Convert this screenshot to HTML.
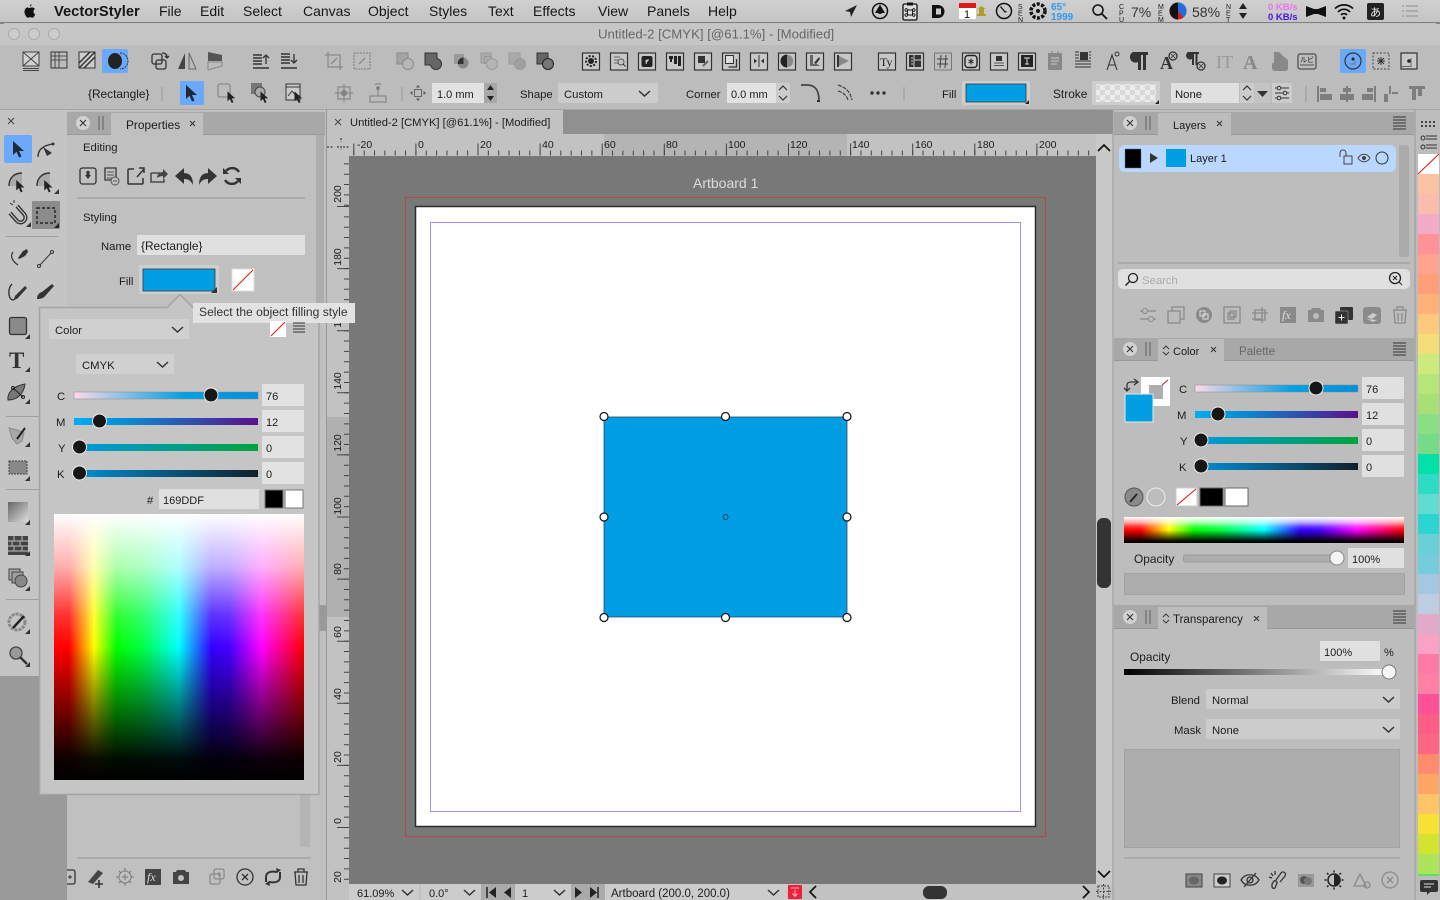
<!DOCTYPE html>
<html lang="en"><head><meta charset="utf-8"><title>VectorStyler</title>
<style>
html,body{margin:0;padding:0;width:1440px;height:900px;overflow:hidden;background:#c2c2c2}
svg{display:block;position:absolute;left:0;top:0}
text{font-family:"Liberation Sans","Noto Sans CJK JP",sans-serif;font-size:11.300px;fill:#1c1c1c}
.m{font-size:14px;fill:#161616}
.n{font-size:11px}
.w{font-size:11.900px}
.s{fill:none;stroke:#333;stroke-width:1.300}
.d{fill:none;stroke:#8a8a8a;stroke-width:1.300}
</style></head><body>
<svg width="1440" height="900" viewBox="0 0 1440 900" xmlns="http://www.w3.org/2000/svg">
<defs>
<linearGradient id="ms" x1="0" y1="0" x2="0" y2="1"><stop offset="0" stop-color="#d0d0d0"/><stop offset="1" stop-color="#c4c4c4"/></linearGradient>
<linearGradient id="hue"><stop offset="0" stop-color="#f00"/><stop offset=".06" stop-color="#f00"/><stop offset=".16" stop-color="#ff0"/><stop offset=".25" stop-color="#0f0"/><stop offset=".35" stop-color="#0f4"/><stop offset=".5" stop-color="#0ff"/><stop offset=".63" stop-color="#30f"/><stop offset=".7" stop-color="#40f"/><stop offset=".83" stop-color="#f0f"/><stop offset="1" stop-color="#f00"/></linearGradient>
<linearGradient id="wh" x1="0" y1="0" x2="0" y2="1"><stop offset="0" stop-color="#fff"/><stop offset=".2" stop-color="#fff" stop-opacity=".68"/><stop offset=".38" stop-color="#fff" stop-opacity=".2"/><stop offset=".5" stop-color="#fff" stop-opacity="0"/></linearGradient>
<linearGradient id="bk" x1="0" y1="0" x2="0" y2="1"><stop offset=".5" stop-color="#000" stop-opacity="0"/><stop offset=".92" stop-color="#000" stop-opacity=".95"/><stop offset="1" stop-color="#000"/></linearGradient>
<linearGradient id="gc"><stop offset="0" stop-color="#fdd9e8"/><stop offset=".6" stop-color="#00a0e3"/><stop offset="1" stop-color="#0090dc"/></linearGradient>
<linearGradient id="gm"><stop offset="0" stop-color="#00adf2"/><stop offset=".3" stop-color="#0a8ad0"/><stop offset="1" stop-color="#5b0f8c"/></linearGradient>
<linearGradient id="gy"><stop offset="0" stop-color="#0098e0"/><stop offset="1" stop-color="#00a33f"/></linearGradient>
<linearGradient id="gk"><stop offset="0" stop-color="#0090d8"/><stop offset="1" stop-color="#10202c"/></linearGradient>
<linearGradient id="gt"><stop offset="0" stop-color="#000"/><stop offset="1" stop-color="#fff"/></linearGradient>
<linearGradient id="gl" x1="0" y1="0" x2="1" y2="1"><stop offset="0" stop-color="#666"/><stop offset="1" stop-color="#ddd"/></linearGradient>
<pattern id="ck" width="10" height="10" patternUnits="userSpaceOnUse"><rect width="10" height="10" fill="#ececec"/><rect width="5" height="5" fill="#d8d8d8"/><rect x="5" y="5" width="5" height="5" fill="#d8d8d8"/></pattern>
<path id="chev" d="M0 0l5.500 5 5.500-5" fill="none" stroke="#333" stroke-width="1.500"/>
<path id="arrow" d="M-5-8L-5 6l3.500-3.200L1 8.500l2.500-1L1 2l5 0z"/>
<g id="closeb"><circle r="7" fill="#d2d2d2"/><path d="M-3-3l6 6M3-3l-6 6" stroke="#333" stroke-width="1.100"/></g>
<g id="menu"><path d="M-6-6h13M-6-3h13M-6 0h13M-6 3h13M-6 6h13" stroke="#333" stroke-width="1"/></g>
<g id="grip"><path d="M-2-7v14M2-7v14" stroke="#777" stroke-width="1.500"/></g>
<g id="pic"><rect x="-8.500" y="-8" width="17" height="17" fill="#c8c8c8" stroke="#333" stroke-width="1.200"/></g>
<path id="pil" d="M-7 4h14v-1l-3 0v-2h-1"/>
</defs>

<!-- menu bar -->
<rect width="1440" height="23" fill="url(#ms)"/>
<path d="M0 23h1440" stroke="#3a3a3a"/>
<path d="M31.500 4.200c-.9.200-1.700 1.100-1.600 2.300 1-.1 1.800-1.100 1.600-2.300zM28 7.400c-2.700 0-4.500 3.500-3 7 1 2.300 2 3.300 3 3.300.9 0 1.200-.6 2.200-.6s1.200.6 2.200.6c1.100 0 2.200-1.800 2.800-3.300-2.200-1.100-2.300-4.300-.2-5.400-.8-1.200-2-1.600-3-1.600s-1.600.6-2.500.6-1.500-.6-2.500-.6z" fill="#111"/>
<text class="m" x="54" y="16" style="font-weight:bold;font-size:14.700px">VectorStyler</text>
<text class="m" x="159" y="16">File</text><text class="m" x="200" y="16">Edit</text><text class="m" x="243" y="16">Select</text><text class="m" x="303" y="16">Canvas</text><text class="m" x="368" y="16">Object</text><text class="m" x="429" y="16">Styles</text><text class="m" x="488" y="16">Text</text><text class="m" x="533" y="16">Effects</text><text class="m" x="598" y="16">View</text><text class="m" x="647" y="16">Panels</text><text class="m" x="708" y="16">Help</text>
<path d="M857 5l-12 6 5 1 1 5z" fill="#222"/>
<circle cx="880" cy="11" r="7.500" fill="none" stroke="#111" stroke-width="1.500"/><path d="M880 4.500l5 8.500h-10z" fill="#111"/><circle cx="880" cy="11" r="3" fill="#111"/>
<rect x="903" y="4" width="14" height="16" rx="1.500" fill="#ddd" stroke="#111" stroke-width="1.300"/><rect x="907" y="2.500" width="6" height="3" fill="#111"/><path d="M907.500 10h5v5h-5zM907.500 10a1.300 1.300 0 1 1 0-.1zM912.500 10a1.300 1.300 0 1 0 0-.1zM907.500 15a1.300 1.300 0 1 0 0 .1zM912.500 15a1.300 1.300 0 1 1 0 .1z" fill="none" stroke="#111" stroke-width=".9"/>
<path d="M932 5h6a6.500 6.500 0 0 1 0 13h-6z" fill="#111"/><rect x="936" y="8.500" width="5" height="6" fill="#ccc"/>
<rect x="959" y="3" width="17" height="16" fill="#fff"/><rect x="959" y="3" width="17" height="5" fill="#e01818"/><text x="964" y="18" style="font-size:11px;fill:#111">1</text>
<path d="M977 14h9v2h-9zM979 9h5v5h-5zM981.500 6l4 3h-8z" fill="#b0a020"/>
<circle cx="1004" cy="11" r="7.500" fill="none" stroke="#111" stroke-width="1.500"/><path d="M1000.500 6.500L1005 12l1.500-.5" fill="none" stroke="#111" stroke-width="1.300"/>
<text x="1018" y="9" style="font-size:7px">S</text><text x="1018" y="15.500" style="font-size:7px">E</text><text x="1018" y="22" style="font-size:7px">N</text>
<text x="1119" y="9" style="font-size:7px">C</text><text x="1119" y="15.500" style="font-size:7px">P</text><text x="1119" y="22" style="font-size:7px">U</text>
<text x="1158" y="9" style="font-size:7px">M</text><text x="1158" y="15.500" style="font-size:7px">E</text><text x="1158" y="22" style="font-size:7px">M</text>
<text x="1226" y="9" style="font-size:7px">N</text><text x="1226" y="15.500" style="font-size:7px">E</text><text x="1226" y="22" style="font-size:7px">T</text>
<circle cx="1038" cy="11" r="7" fill="none" stroke="#111" stroke-width="3.500" stroke-dasharray="3 1.500"/><circle cx="1038" cy="11" r="2" fill="#111"/>
<text x="1051" y="10" style="font-size:10px;fill:#2f9bf0;font-weight:bold">65°</text><text x="1051" y="20" style="font-size:10px;fill:#2f9bf0;font-weight:bold">1999</text>
<circle cx="1098" cy="10" r="5" fill="none" stroke="#111" stroke-width="1.500"/><path d="M1102 14l5 5" stroke="#111" stroke-width="1.800"/>
<text x="1131" y="17" style="font-size:14px;fill:#333">7%</text>
<circle cx="1178" cy="11" r="8.500" fill="#e01818"/><path d="M1178 11V2.500a8.500 8.500 0 0 1 8.500 8z" fill="#1f6fe0"/><path d="M1178 11l8.500-.5a8.500 8.500 0 0 1-3 7z" fill="#1f6fe0"/><path d="M1178 19.500a8.500 8.500 0 0 1 0-17z" fill="#111"/>
<text x="1192" y="17" style="font-size:14px;fill:#333">58%</text>
<path d="M1243 3l4 6h-8zM1243 19l4-6h-8z" fill="#222"/>
<text x="1268" y="10" style="font-size:9.500px;fill:#f070f0;font-weight:bold">0 KB/s</text><text x="1268" y="20" style="font-size:9.500px;fill:#4a16e8;font-weight:bold">0 KB/s</text>
<path d="M1306 6l8 3h4l8-3v11l-8-3h-4l-8 3z" fill="#111"/>
<path d="M1335 8.500a13 13 0 0 1 18 0M1338 12a8 8 0 0 1 12 0M1341 15a4 4 0 0 1 6 0" fill="none" stroke="#111" stroke-width="1.700"/><circle cx="1344" cy="18" r="1.500" fill="#111"/>
<rect x="1367" y="3" width="17" height="17" rx="2" fill="#222"/><text x="1370" y="16" style="font-size:11px;fill:#eee">あ</text>
<path d="M1402 6h2M1402 11h2M1402 16h2M1406 6h12M1406 11h12M1406 16h12" stroke="#999" stroke-width="1.300"/>

<!-- window chrome -->
<path d="M0 28a5 5 0 0 1 5-5h1430a5 5 0 0 1 5 5v82H0z" fill="#c2c2c2"/>
<rect x="0" y="24" width="1440" height="21" fill="#c6c6c6"/>
<circle cx="14" cy="34" r="5.500" fill="#cdcdcd" stroke="#aaa"/><circle cx="34" cy="34" r="5.500" fill="#cdcdcd" stroke="#aaa"/><circle cx="54" cy="34" r="5.500" fill="#cdcdcd" stroke="#aaa"/>
<text x="598" y="38.500" style="font-size:13.200px;fill:#666">Untitled-2 [CMYK] [@61.1%] - [Modified]</text>
<rect x="0" y="45" width="1440" height="65" fill="#bcbcbc"/>
<path d="M0 109.500h1440" stroke="#a6a6a6"/>

<!-- toolbar row 1 -->
<rect x="102" y="49" width="26" height="24" rx="2" fill="#6aa9fb"/>
<g transform="translate(31,60)"><rect x="-8" y="-8" width="16" height="14" fill="#d0d0d0" stroke="#444"/><path d="M-8-8l16 14M8-8l-16 14M-8 8.500h16M-8 10.500h16" stroke="#444" fill="none"/></g>
<g transform="translate(59,60)"><rect x="-8" y="-8" width="16" height="16" fill="#bbb" stroke="#333"/><path d="M-8-4h16M-8 0h16M-4-8v16M0-8v16" stroke="#333" stroke-width=".8"/></g>
<g transform="translate(87,60)"><rect x="-8" y="-8" width="16" height="16" fill="#ccc" stroke="#333"/><path d="M-8 3L3-8M-8 8L8-8M-3 8L8-3" stroke="#333" stroke-width="1.500"/></g>
<g transform="translate(115,61)"><ellipse rx="7" ry="8" fill="#222"/><path d="M5-8a8 8 0 0 1 0 16" fill="none" stroke="#333" stroke-dasharray="2 1"/></g>
<g transform="translate(159,61)"><rect x="-7" y="-7" width="10" height="10" rx="2" class="s"/><rect x="-3" y="-1" width="10" height="9" rx="2" class="s"/><path d="M3-8c3 0 5 1 5 4M6-5l2 2 2-2" class="s"/></g>
<g transform="translate(187,61)"><path d="M-2-8v16h-7z" fill="#444"/><path d="M2-8v16h7z" fill="#bbb" stroke="#666"/></g>
<g transform="translate(215,61)"><path d="M-7-9l14 3v6h-14z" fill="#555"/><path d="M-7 1h14v4l-14 4z" fill="#bbb" stroke="#888"/></g>
<g transform="translate(261,61)"><path d="M-8-6h9M-8-3h9M-8 0h9M-8 3h9M-8 7h16" stroke="#333" stroke-width="1.500"/><path d="M5 3v-9M2-3l3-3 3 3" class="s"/></g>
<g transform="translate(289,61)"><path d="M-8-7h9M-8-4h9M-8-1h9M-8 2h9M-8 7h16" stroke="#333" stroke-width="1.500"/><path d="M5-7v9M2-1l3 3 3-3" class="s"/></g>
<g transform="translate(334,61)"><rect x="-6" y="-6" width="12" height="12" class="d"/><path d="M-3 3l6-6M-9-6h3M6 6h3M-6-9v3M6 6v3" class="d"/></g>
<g transform="translate(362,61)"><rect x="-8" y="-8" width="16" height="16" class="d" stroke-dasharray="2 1"/><path d="M-3 3l6-6" class="d"/></g>
<g transform="translate(405,61)"><rect x="-8" y="-8" width="11" height="11" fill="#a4a4a4" stroke="#8a8a8a"/><circle cx="3" cy="3" r="5.500" fill="#b8b8b8" stroke="#8a8a8a"/></g>
<g transform="translate(433,61)"><rect x="-8" y="-8" width="12" height="12" fill="#666" stroke="#333"/><circle cx="3" cy="3" r="5.500" fill="#666" stroke="#333"/><rect x="-7.500" y="-7.500" width="11" height="11" fill="#666"/></g>
<g transform="translate(461,61)"><rect x="-7" y="-7" width="10" height="10" fill="#999"/><circle cx="2" cy="2" r="5.500" fill="#888"/><path d="M-3 3a5.500 5.500 0 0 1 5.500-6.500V3z" fill="#333"/></g>
<g transform="translate(489,61)"><rect x="-8" y="-8" width="10" height="10" fill="#aaa" stroke="#999"/><rect x="-4.500" y="-4.500" width="7" height="7" fill="none" stroke="#999"/><circle cx="3" cy="3" r="5.500" fill="#b4b4b4" stroke="#999"/></g>
<g transform="translate(517,61)"><rect x="-8" y="-8" width="11" height="11" fill="#aaa" stroke="#999"/><circle cx="3" cy="3" r="5.500" fill="#a0a0a0" stroke="#999"/></g>
<g transform="translate(545,61)"><rect x="-8" y="-8" width="11" height="11" fill="#666" stroke="#333"/><circle cx="3" cy="3" r="5.500" fill="#777" stroke="#222"/></g>
<g transform="translate(591,61)"><use href="#pic"/><circle r="3" fill="#222"/><circle r="5" fill="none" stroke="#222" stroke-dasharray="2 1.500" stroke-width="2"/></g>
<g transform="translate(619,61)"><use href="#pic"/><path d="M-5-4h6M-5-1h4M-5 2h4" stroke="#666"/><circle cx="2" cy="1" r="3" fill="none" stroke="#555"/><path d="M4 3l2.500 2.500" stroke="#333"/></g>
<g transform="translate(647,61)"><use href="#pic"/><rect x="-5.500" y="-5" width="11" height="11" rx="2" fill="#222"/><path d="M-1 3l1-4h2M-2 0h3" stroke="#ddd" fill="none"/></g>
<g transform="translate(675,61)"><use href="#pic"/><path d="M-6-5h4v3h-1v3h-2v-3h-1zM-1-5h3v8h-3zM3-5h3v10h-3z" fill="#222"/></g>
<g transform="translate(703,61)"><use href="#pic"/><rect x="-5" y="-5" width="7" height="7" fill="#333"/><path d="M0 5l5-5" stroke="#666" stroke-width="2"/></g>
<g transform="translate(731,61)"><use href="#pic"/><rect x="-5.500" y="-5.500" width="8" height="8" fill="#ddd" stroke="#333"/><path d="M5.500-2v8h-8" fill="none" stroke="#333" stroke-width="1.300"/></g>
<g transform="translate(759,61)"><use href="#pic"/><path d="M0-6v12" stroke="#333"/><path d="M-2 0l-3-2.500v5zM2 0l3-2.500v5z" fill="#333"/></g>
<g transform="translate(787,61)"><use href="#pic"/><circle r="6.500" fill="#888" stroke-dasharray="1 1" stroke="#c8c8c8"/><path d="M0-6.500a6.500 6.500 0 0 0 0 13z" fill="#222"/></g>
<g transform="translate(815,61)"><use href="#pic"/><path d="M-5 5h10l-3-2h-4V-6h-3z" fill="#666"/><path d="M-1 2l5-6 1 2-4 5z" fill="#333"/></g>
<g transform="translate(843,61)"><use href="#pic"/><path d="M-6-6l12 6-12 6z" fill="#888"/><path d="M-5-6v12" stroke="#333" stroke-width="2"/></g>
<g transform="translate(887,61)"><use href="#pic"/><text x="-7" y="5" style="font-size:12px;font-family:'Liberation Serif',serif;fill:#222">Ty</text></g>
<g transform="translate(915,61)"><use href="#pic"/><rect x="-6" y="-6" width="12" height="12" fill="#333"/><path d="M-1-6v12M-1-1h7" stroke="#ccc"/><path d="M-4-3h2M-4 0h2M-4 3h2" stroke="#ccc"/></g>
<g transform="translate(943,61)"><rect x="-8.500" y="-8" width="17" height="17" fill="none" stroke="#777"/><path d="M-2-6l-1 13M3-6l-1 13M-6-2h11M-6 3h11" stroke="#444"/></g>
<g transform="translate(971,61)"><use href="#pic"/><rect x="-6" y="-5.500" width="12" height="12" rx="3" fill="none" stroke="#222" stroke-width="1.400"/><path d="M0-2.500v6M-2.500-1l5 3M2.500-1l-5 3" stroke="#222"/></g>
<g transform="translate(999,61)"><use href="#pic"/><rect x="-3" y="-5" width="6" height="5" fill="#333"/><path d="M-5 2h10M-5 4.500h10" stroke="#555"/></g>
<g transform="translate(1027,61)"><use href="#pic"/><rect x="-6" y="-6" width="12" height="12" fill="#222"/><path d="M-3-3h6M0-3v6M-2 3h4" stroke="#ddd"/></g>
<g transform="translate(1055,61)"><rect x="-7" y="-8" width="14" height="17" rx="1" fill="#888"/><path d="M-4-3h8M-4 0h8M-4 3h6" stroke="#ccc"/><path d="M-3-10v3M3-10v3" stroke="#888"/></g>
<g transform="translate(1083,61)"><rect x="-3" y="-9" width="8" height="8" fill="#333"/><path d="M-8-9h4M-8-6h4M-8-3h4M6-9h2M6-6h2M6-3h2M-8 0h16M-8 3h16M-8 6h16" stroke="#333"/></g>
<path d="M1107 70l5-15 5 15M1109 65h6" fill="none" stroke="#333" stroke-width="1.100"/><circle cx="1117" cy="54" r="2" fill="none" stroke="#333"/>
<path d="M1133 52h15v3h-2v15h-3V55h-2v15h-3v-8a5.500 5.500 0 0 1-5-10z" fill="#333"/>
<text x="1160" y="69" style="font-size:18px;font-family:'Liberation Serif',serif;fill:#333;font-weight:bold">A</text><circle cx="1173" cy="56" r="4" class="s"/><path d="M1171 54l4 4M1175 54l-4 4" stroke="#333" stroke-width=".8"/>
<path d="M1188 52h11v2h-1.500v11h-2V54h-1.500v11h-2v-6a3.600 3.600 0 0 1-4-7z" fill="#333"/><circle cx="1201" cy="66" r="4" class="s"/><path d="M1199 64l4 4M1203 64l-4 4" stroke="#333" stroke-width=".8"/>
<text x="1216" y="68" style="font-size:18px;font-family:'Liberation Serif',serif;fill:#999">IT</text>
<text x="1243" y="69" style="font-size:20px;font-family:'Liberation Serif',serif;fill:#888;font-weight:bold">A</text>
<path d="M1274 52h5l4 4 4 3c1 1 1 2 1 4v6c-1 2-2 2-4 2h-8c-4 0-4-2-4-4v-3l2-2v-6z" fill="#888"/>
<g transform="translate(1307,61)"><rect x="-9" y="-7" width="18" height="15" rx="2" fill="none" stroke="#333"/><text x="-7" y="1" style="font-size:7px">ルビ</text><path d="M-7 4h14" stroke="#555"/></g>
<rect x="1340" y="49" width="26" height="24" rx="2" fill="#6aa9fb"/>
<circle cx="1353" cy="61" r="8" fill="none" stroke="#333" stroke-width="1.200"/><circle cx="1353" cy="59" r="1.500" fill="#222"/><path d="M1349 64h6v-4" stroke="#777" fill="none"/>
<g transform="translate(1381,61)"><rect x="-8" y="-8" width="16" height="16" fill="none" stroke="#444" stroke-dasharray="2 1.500"/><path d="M0-4v8M-4 0h8M-3-3l6 6M3-3l-6 6" stroke="#333"/></g>
<g transform="translate(1409,61)"><path d="M-8 8V-8H8V8z" fill="#c8c8c8" stroke="#333" stroke-width="1.200"/><circle cx="0" cy="0" r="1.800" fill="#222"/><path d="M-8 5.500h10V-3" stroke="#666" fill="none"/></g>

<!-- toolbar row 2 -->
<text class="w" x="88" y="98">{Rectangle}</text><path d="M162 87v14" stroke="#999"/>
<rect x="180" y="81" width="24" height="24" rx="2" fill="#6aa9fb"/><use href="#arrow" transform="translate(191,93)" fill="#1f2a38"/>
<g transform="translate(225,92)"><rect x="-7" y="-8" width="12" height="13" rx="2" class="d" stroke="#555"/></g><use href="#arrow" transform="translate(231,97) scale(.7)" fill="#222"/>
<g transform="translate(259,91)"><rect x="-8" y="-8" width="11" height="11" fill="#777"/><circle cx="1" cy="1" r="5" fill="#aaa" stroke="#444"/></g><use href="#arrow" transform="translate(264,97) scale(.7)" fill="#222"/>
<g transform="translate(293,92)"><rect x="-7" y="-8" width="14" height="16" fill="#ccc" stroke="#333"/><path d="M-7-5h14M-5 4l4-5 4 5" stroke="#333" fill="none"/></g><use href="#arrow" transform="translate(298,97) scale(.7)" fill="#222"/>
<g transform="translate(344,93)"><rect x="-6" y="-6" width="12" height="12" class="d"/><circle r="3" fill="#777"/><path d="M0-9v18M-9 0h18" class="d"/></g>
<g transform="translate(378,93)"><rect x="-8" y="3" width="16" height="6" class="d" stroke="#666"/><path d="M0 3v-7M-3-8a4 4 0 0 1 6 0" class="d"/><circle cy="-5" r="1.800" fill="#777"/></g>
<path d="M402 87v14" stroke="#999"/>
<g transform="translate(418,93)"><rect x="-3.500" y="-3.500" width="7" height="7" fill="none" stroke="#666"/><path d="M0-8l2 2.500h-4zM0 8l2-2.500h-4zM-8 0l2.500-2v4zM8 0l-2.500-2v4z" fill="#555"/></g>
<rect x="432" y="83" width="52" height="20" fill="#e2e2e2"/><text class="n" x="437" y="98">1.0 mm</text>
<rect x="484" y="83" width="13" height="20" fill="#a8a8a8"/><path d="M490.500 85l3.500 5h-7zM490.500 101l3.500-5h-7z" fill="#222"/>
<text x="520" y="98">Shape</text><rect x="558" y="83" width="100" height="20" rx="1" fill="#ccc"/><text x="564" y="98">Custom</text><use href="#chev" transform="translate(639,91)"/>
<text x="686" y="98">Corner</text><rect x="727" y="83" width="49" height="20" fill="#e2e2e2"/><text class="n" x="731" y="98">0.0 mm</text>
<rect x="776" y="83" width="14" height="20" fill="#ccc"/><path d="M779 90l4-4 4 4M779 96l4 4 4-4" fill="none" stroke="#333" stroke-width="1.200"/>
<path d="M801 85h6c9 0 12 6 12 16" fill="none" stroke="#444" stroke-width="1.800"/><path d="M817 100l3 1v1h-3z" fill="#222"/>
<path d="M838 85c9 3 12 7 14 15M838 91c5 1 9 5 10 9" fill="none" stroke="#444" stroke-width="1.200" stroke-dasharray="4 1"/>
<circle cx="872" cy="93" r="1.700" fill="#333"/><circle cx="878" cy="93" r="1.700" fill="#333"/><circle cx="884" cy="93" r="1.700" fill="#333"/>
<path d="M904 87v14" stroke="#999"/>
<text x="942" y="98">Fill</text><rect x="962" y="81" width="68" height="24" rx="1" fill="#cecece"/><rect x="966" y="84" width="60" height="18" fill="#009fe3" stroke="#3a3a3a" stroke-width=".8"/><path d="M1029 100v4h-4z" fill="#222"/>
<text class="w" x="1053" y="98">Stroke</text><rect x="1092" y="81" width="68" height="24" rx="1" fill="#cecece"/><rect x="1096" y="84" width="60" height="18" fill="url(#ck)"/><path d="M1159 100v4h-4z" fill="#222"/>
<rect x="1171" y="83" width="68" height="20" fill="#e0e0e0"/><text x="1175" y="98">None</text>
<rect x="1240" y="83" width="14" height="20" fill="#ccc"/><path d="M1243 90l4-4 4 4M1243 96l4 4 4-4" fill="none" stroke="#333" stroke-width="1.200"/>
<rect x="1254" y="83" width="16" height="20" fill="#c4c4c4"/><path d="M1257 91h11l-5.500 6z" fill="#333"/><rect x="1272" y="83" width="20" height="20" fill="#ccc"/><path d="M1275 88h14M1275 93h14M1275 98h14" stroke="#333"/><circle cx="1279" cy="88" r="1.800" fill="#ccc" stroke="#333"/><circle cx="1285" cy="93" r="1.800" fill="#ccc" stroke="#333"/><circle cx="1279" cy="98" r="1.800" fill="#ccc" stroke="#333"/>
<path d="M1306 86v16" stroke="#999"/>
<g fill="#7e7e7e"><path d="M1317 86h2v16h-2zM1320 88h6v4h-6zM1320 94h12v6h-12z"/><path d="M1346 86h2v16h-2zM1343 88h8v4h-8zM1340 94h14v6h-14z"/><path d="M1374 86h2v16h-2zM1367 88h6v4h-6zM1362 94h11v6h-11z"/><path d="M1384 102v-8h4v8zM1389 94v-8h2v8zM1392 92h6v2h-6z"/><path d="M1409 86h16v3h-16zM1412 89h4v11h-4zM1418 89h4v7h-4z"/></g>

<!-- left toolbar -->
<rect x="0" y="110" width="67" height="566" fill="#c4c4c4"/>
<rect x="0" y="676" width="67" height="224" fill="#9a9a9a"/>
<path d="M8 118l6 6M14 118l-6 6" stroke="#444"/>
<rect x="4" y="135" width="28" height="28" rx="2" fill="#6aa9fb"/>
<use href="#arrow" transform="translate(18,149)" fill="#1f2a38"/>
<g><path d="M38 157c0-7 4-11 14-13" fill="none" stroke="#333" stroke-width="1.400"/><path d="M43 147l9 6-5 3z" fill="#333"/><circle cx="53" cy="144" r="1.500" fill="#333"/></g>
<path d="M9 186C9 178 14 173 22 173V186z" fill="#aaa"/><path d="M9 186C9 178 14 173 22 173" fill="none" stroke="#333" stroke-width="1.400"/><use href="#arrow" transform="translate(20,186) scale(.75)" fill="#222"/>
<path d="M37 186C37 178 42 173 50 173V186z" fill="#aaa"/><path d="M37 186C37 178 42 173 50 173" fill="none" stroke="#333" stroke-width="1.400"/><use href="#arrow" transform="translate(48,186) scale(.75)" fill="#222"/><path d="M59 189v5h-5z" fill="#333"/>
<path d="M10 213l7 8a4.500 4.500 0 0 0 7-7l-7-8" fill="none" stroke="#333" stroke-width="4"/><path d="M10 213l7 8a4.500 4.500 0 0 0 7-7l-7-8" fill="none" stroke="#ccc" stroke-width="1.200"/><path d="M10 203l3 2M14 200v3" stroke="#333"/><path d="M31 222v5h-5z" fill="#333"/>
<rect x="32" y="201" width="28" height="28" rx="1" fill="#8c8c8c"/><rect x="37" y="208" width="18" height="15" fill="none" stroke="#333" stroke-width="1.700" stroke-dasharray="3 2"/><path d="M59 223v5h-5z" fill="#222"/>
<path d="M6 236.500h52" stroke="#a0a0a0"/>
<path d="M13 252c-3 4-1 9 5 13" fill="none" stroke="#333" stroke-width="1.200"/><path d="M18 258l5-7 4-2 1 3-3 4-6 3z" fill="#333"/>
<path d="M39 266L52 252" stroke="#333"/><circle cx="39" cy="266" r="1.500" fill="#ccc" stroke="#333"/><circle cx="52" cy="252" r="1.500" fill="#ccc" stroke="#333"/>
<path d="M12 284c-4 4-4 12-1 15s6-2 5-4" fill="none" stroke="#333" stroke-width="1.400"/><path d="M15 296l10-10 2 2-10 11-3 0z" fill="#333"/>
<path d="M37 299c0-4 2-6 5-7l10-8 2 2-8 9c-2 3-5 4-9 4z" fill="#333"/>
<rect x="9.500" y="317.500" width="17" height="17" rx="2" fill="#8a8a8a" stroke="#333" stroke-width="1.300"/><path d="M30 334v5h-5z" fill="#333"/>
<text x="9" y="368" style="font-size:23px;font-family:'Liberation Serif',serif;font-weight:bold;fill:#333">T</text><path d="M30 367v5h-5z" fill="#333"/>
<g transform="translate(17,392)"><path d="M-9 8c-1-7 5-14 17-16-1 8-6 16-17 16z" fill="#777" stroke="#333"/><circle cx="-4" cy="-4" r="1.500" fill="none" stroke="#222"/><circle cx="6" cy="5" r="1.500" fill="none" stroke="#222"/><path d="M-4-4L6 5" stroke="#222"/></g><path d="M30 399v5h-5z" fill="#333"/>
<path d="M6 416.500h33" stroke="#a0a0a0"/>
<g transform="translate(18,435)"><path d="M-9-7l8 2 7 3-2 8-5 3-5-6z" fill="#a8a8a8" stroke="#888"/><path d="M-1 4L7-7" stroke="#222" stroke-width="2"/></g><path d="M30 442v5h-5z" fill="#333"/>
<rect x="9" y="461" width="18" height="13" fill="#888" stroke="#444" stroke-dasharray="2 1"/><path d="M30 476v5h-5z" fill="#333"/>
<path d="M6 489.500h33" stroke="#a0a0a0"/>
<rect x="8" y="502" width="20" height="20" fill="url(#gl)"/><path d="M30 520v5h-5z" fill="#333"/>
<rect x="8" y="536" width="20" height="19" fill="#444"/><path d="M8 541h20M8 546h20M8 551h20" stroke="#bbb"/><path d="M14 536v5M22 536v5M12 541v5M20 541v5M14 546v5M22 546v5" stroke="#bbb"/><path d="M30 551v5h-5z" fill="#333"/>
<g transform="translate(17,578)"><rect x="-8" y="-9" width="11" height="11" fill="#a8a8a8" stroke="#444"/><rect x="-5" y="-6" width="11" height="11" fill="#a0a0a0" stroke="#444"/><circle cx="4" cy="3" r="6" fill="#888" stroke="#444"/></g><path d="M30 586v5h-5z" fill="#333"/>
<path d="M6 599.500h33" stroke="#a0a0a0"/>
<g transform="translate(17,622)"><circle r="8" fill="none" stroke="#888" stroke-width="3" stroke-dasharray="3 1"/><path d="M-4 6L7-6" stroke="#222" stroke-width="2.500"/></g><path d="M30 629v5h-5z" fill="#333"/>
<g transform="translate(16,653)"><circle r="6" fill="#9a9a9a" stroke="#444" stroke-width="1.300"/><path d="M4 4l7 7" stroke="#333" stroke-width="2.500"/></g><path d="M30 662v5h-5z" fill="#333"/>

<!-- properties panel -->
<rect x="67" y="110" width="260" height="790" fill="#c0c0c0"/>
<rect x="67" y="112" width="258" height="22" fill="#a8a8a8"/><path d="M67 134.500h258" stroke="#999"/>
<rect x="111" y="113" width="92" height="22" fill="#c0c0c0"/>
<use href="#closeb" transform="translate(83,123)"/><use href="#grip" transform="translate(101,123)"/>
<text class="w" x="126" y="129">Properties</text><path d="M190 121l5 5M195 121l-5 5" stroke="#333"/>
<rect x="316" y="135" width="8" height="170" fill="#adadad"/>
<rect x="319" y="605" width="7" height="26" fill="#999"/>
<text x="83" y="151">Editing</text>
<g transform="translate(88,176)"><rect x="-8" y="-8" width="16" height="16" rx="2.500" class="s" stroke-width="1.500"/><path d="M-3-1h6l-3 4zM-1.500-5h3v4h-3z" fill="#333"/></g>
<g transform="translate(112,176)"><path d="M-7-8h11v12h-11z" class="s" stroke="#555"/><path d="M-5-4h7M-5-1h7M-5 2h5" stroke="#555"/><circle cx="3" cy="5" r="4" fill="#c0c0c0" stroke="#555"/><path d="M1 5h4" stroke="#555"/></g>
<g transform="translate(136,176)"><path d="M-2-7h-5a1 1 0 0 0-1 1V7a1 1 0 0 0 1 1H6a1 1 0 0 0 1-1V2M1 1L8-7M3-8h5v5" fill="none" stroke="#333" stroke-width="1.500"/></g>
<g transform="translate(159,176)"><path d="M-8-3h9M-8-3V6h13V3" class="s" stroke="#555" stroke-width="1.500"/><path d="M-2 2c0-4 3-6 6-6v-3l5 5-5 5V0c-2 0-4 .500-6 2z" fill="#444"/></g>
<path d="M175 176l9-8v5c6 0 9 4 9 12-2-4-4-6-9-6v5z" fill="#333"/>
<path d="M217 176l-9-8v5c-6 0-9 4-9 12 2-4 4-6 9-6v5z" fill="#333"/>
<g transform="translate(232,176)"><path d="M7-4A8 8 0 0 0-6-5M-7 4A8 8 0 0 0 6 5" fill="none" stroke="#333" stroke-width="2.500"/><path d="M-9-8v6h6zM9 8V2H3z" fill="#333"/></g>
<path d="M77 198h228" stroke="#aaa" stroke-width="2"/>
<text x="83" y="221">Styling</text>
<text x="101" y="250">Name</text><rect x="137" y="235" width="168" height="20" fill="#e0e0e0"/><text class="w" x="141" y="250">{Rectangle}</text>
<text x="119" y="285">Fill</text><rect x="139" y="265" width="80" height="29" rx="1" fill="#cecece"/><rect x="143" y="269" width="72" height="22" fill="#009fe3" stroke="#3a3a3a" stroke-width=".8"/><path d="M217 287v6h-6z" fill="#333"/>
<rect x="232" y="269" width="22" height="22" fill="#fff" stroke="#ddd"/><path d="M233 290l20-20" stroke="#e01010"/>
<rect x="300" y="780" width="10" height="67" rx="2" fill="#b4b4b4"/>
<path d="M77 858h234" stroke="#aaa" stroke-width="2"/>
<g transform="translate(71,877)"><path d="M-4-7h6a2 2 0 0 1 2 2V5a2 2 0 0 1-2 2h-6" class="s" stroke-width="1.500"/><path d="M-3 0h4M-1-2v4" stroke="#333"/></g>
<g transform="translate(96,877)"><path d="M-8 5L2-7l5 3L-3 7z" fill="#444"/><path d="M3 3v8M-1 7h8" stroke="#333" stroke-width="1.600"/></g>
<g transform="translate(125,877)"><circle r="6" class="d" stroke="#777"/><path d="M-3 0h6M0-3v6M0-9v3M0 6v3M-9 0h3M6 0h3M-6-6l2 2M4 4l2 2M-6 6l2-2M4-4l2-2" stroke="#777"/></g>
<g transform="translate(153,877)"><rect x="-8" y="-8" width="16" height="16" fill="#444"/><text x="-6" y="4" style="font-size:12px;font-family:'Liberation Serif',serif;font-style:italic;fill:#ddd">fx</text></g>
<g transform="translate(181,877)"><path d="M-8-5h3l1-2h8l1 2h3V7H-8z" fill="#444"/><circle cy="1" r="3" fill="#c0c0c0"/></g>
<g transform="translate(217,876)"><rect x="-7" y="-2" width="10" height="10" rx="2" class="d"/><rect x="-3" y="-7" width="10" height="10" rx="2" class="d"/><path d="M0-2h4M2-4v4" class="d"/></g>
<g transform="translate(245,877)"><circle r="8" class="s"/><path d="M-3-3l6 6M3-3l-6 6" class="s"/></g>
<g transform="translate(273,877)"><path d="M-7 5V0c0-5 5-6 11-5M7-5V0c0 5-5 6-11 5" fill="none" stroke="#333" stroke-width="2"/><path d="M3-9l5 2-4 3zM-3 9l-5-2 4-3z" fill="#333"/></g>
<g transform="translate(301,877)"><path d="M-7-5h14M-3-5v-3h6v3M-6-5l1 13h10l1-13M-2-2v8M2-2v8" class="s"/></g>

<!-- document tab and rulers -->
<rect x="327" y="110" width="786" height="24" fill="#909090"/>
<rect x="327" y="110" width="236" height="24" fill="#c2c2c2"/>
<path d="M326.500 110v790" stroke="#999"/>
<path d="M335 119l6 6M341 119l-6 6" stroke="#444"/>
<text x="350" y="126" style="font-size:11.200px">Untitled-2 [CMYK] [@61.1%] - [Modified]</text>
<rect x="327" y="134" width="786" height="22" fill="#c2c2c2"/>
<rect x="327" y="156" width="22" height="728" fill="#c2c2c2"/>
<rect x="604" y="134" width="243" height="22" fill="#b4b4b4"/>
<rect x="327" y="417" width="22" height="200" fill="#b0b0b0"/>
<path d="M327 147h6M337 147h4M343 147h6M341 138v4M341 146v4" stroke="#222" stroke-dasharray="2 1.500"/>
<path d="M353.300 153h742" stroke="#444" stroke-width="5" stroke-dasharray="1 9.350" fill="none"/>
<path d="M353.300 149.500H1095" stroke="#444" stroke-width="12" stroke-dasharray="1 61.100" fill="none"/>
<path d="M346.500 206V884" stroke="#444" stroke-width="5" stroke-dasharray="1 9.350" fill="none"/>
<path d="M343 206V884" stroke="#444" stroke-width="12" stroke-dasharray="1 61.100" fill="none"/>
<path d="M346.500 156V206" stroke="#444" stroke-width="5" stroke-dasharray="1 9.350" stroke-dashoffset="3" fill="none"/>
<text x="357" y="148" style="font-size:10.500px">-20</text><text x="418" y="148" style="font-size:10.500px">0</text><text x="480" y="148" style="font-size:10.500px">20</text><text x="542" y="148" style="font-size:10.500px">40</text><text x="604" y="148" style="font-size:10.500px">60</text><text x="666" y="148" style="font-size:10.500px">80</text><text x="728" y="148" style="font-size:10.500px">100</text><text x="790" y="148" style="font-size:10.500px">120</text><text x="852" y="148" style="font-size:10.500px">140</text><text x="915" y="148" style="font-size:10.500px">160</text><text x="977" y="148" style="font-size:10.500px">180</text><text x="1039" y="148" style="font-size:10.500px">200</text>
<g text-anchor="middle">
<text transform="translate(341,194) rotate(-90)" style="font-size:10.500px">200</text>
<text transform="translate(341,257) rotate(-90)" style="font-size:10.500px">180</text>
<text transform="translate(341,319) rotate(-90)" style="font-size:10.500px">160</text>
<text transform="translate(341,381) rotate(-90)" style="font-size:10.500px">140</text>
<text transform="translate(341,443) rotate(-90)" style="font-size:10.500px">120</text>
<text transform="translate(341,506) rotate(-90)" style="font-size:10.500px">100</text>
<text transform="translate(341,569) rotate(-90)" style="font-size:10.500px">80</text>
<text transform="translate(341,632) rotate(-90)" style="font-size:10.500px">60</text>
<text transform="translate(341,694) rotate(-90)" style="font-size:10.500px">40</text>
<text transform="translate(341,757) rotate(-90)" style="font-size:10.500px">20</text>
<text transform="translate(341,821) rotate(-90)" style="font-size:10.500px">0</text>
<text transform="translate(341,877) rotate(-90)" style="font-size:10.500px">20</text>
</g>

<!-- canvas -->
<rect x="349" y="156" width="747" height="728" fill="#777877"/>
<text x="693" y="188" style="font-size:14px;fill:#dcdcdc">Artboard 1</text>
<rect x="405.500" y="197.500" width="640" height="639" fill="none" stroke="#b04848"/>
<rect x="415.500" y="206.500" width="620" height="620" fill="#fff" stroke="#2c2c2c" stroke-width="1.500"/>
<rect x="430.500" y="222.500" width="590" height="589" fill="none" stroke="#a98cf5"/>
<rect x="604" y="417" width="243" height="200" fill="#009fe3" stroke="#2a4a6a" stroke-width=".8"/>
<g fill="#fff" stroke="#111" stroke-width="1.200"><circle cx="604" cy="416.500" r="4"/><circle cx="725.500" cy="416.500" r="4"/><circle cx="847" cy="416.500" r="4"/><circle cx="604" cy="517" r="4"/><circle cx="847" cy="517" r="4"/><circle cx="604" cy="617.500" r="4"/><circle cx="725.500" cy="617.500" r="4"/><circle cx="847" cy="617.500" r="4"/></g>
<circle cx="725.500" cy="517" r="2.500" fill="none" stroke="#1a3a55" stroke-width=".9"/>

<!-- vertical scroll -->
<rect x="1096" y="134" width="17" height="750" fill="#c8c8c8"/>
<path d="M1098 151l6-6 6 6" fill="none" stroke="#111" stroke-width="1.700"/>
<path d="M1098 871l6 6 6-6" fill="none" stroke="#111" stroke-width="1.700"/>
<rect x="1097" y="518" width="14" height="70" rx="6" fill="#333"/>
<path d="M1113 110v790" stroke="#999"/>

<!-- status bar -->
<rect x="349" y="884" width="747" height="16" fill="#c2c2c2"/>
<rect x="349" y="884" width="70" height="16" fill="#ccc"/><rect x="421" y="884" width="60" height="16" fill="#ccc"/>
<rect x="481" y="884" width="34" height="16" fill="#aaa"/><rect x="515" y="884" width="56" height="16" fill="#ccc"/><rect x="571" y="884" width="34" height="16" fill="#aaa"/><rect x="605" y="884" width="182" height="16" fill="#ccc"/>
<text class="n" x="357" y="897">61.09%</text><use href="#chev" transform="translate(402,890)"/>
<text class="n" x="429" y="897">0.0°</text><use href="#chev" transform="translate(464,890)"/>
<path d="M487 887v11" stroke="#222" stroke-width="1.500"/><path d="M496 887v11l-7-5.500zM511 887v11l-7-5.500z" fill="#222"/>
<text class="n" x="522" y="897">1</text><use href="#chev" transform="translate(554,890)"/>
<path d="M575 887v11l7-5.500zM590 887v11l7-5.500z" fill="#222"/><path d="M598 887v11" stroke="#222" stroke-width="1.500"/>
<text x="611" y="897" style="font-size:11.500px">Artboard (200.0, 200.0)</text><use href="#chev" transform="translate(768,890)"/>
<rect x="788" y="885" width="14" height="14" rx="1" fill="#f0203c"/><path d="M791 888h8M795 890v6M792.500 893.500l2.500 3 2.500-3" stroke="#fbb" fill="none"/>
<path d="M816 886l-6 6 6 6" fill="none" stroke="#111" stroke-width="1.700"/>
<rect x="923" y="886" width="24" height="13" rx="6" fill="#333"/>
<path d="M1083 886l6 6-6 6" fill="none" stroke="#111" stroke-width="1.700"/>
<rect x="1098" y="886" width="11" height="11" fill="none" stroke="#444" stroke-dasharray="2 1"/><path d="M1103.500 884v15M1096 891.500h15" stroke="#444" stroke-dasharray="2 1.500"/>

<!-- popup -->
<path d="M39.500 307.500H167l13-13 13 13h126v487H39.500z" fill="#c5c5c5" stroke="#a4a4a4" stroke-width="1.500"/>
<rect x="193" y="303" width="162" height="20" fill="#e2e2e2"/>
<text x="199" y="316" style="fill:#333;font-size:12.100px">Select the object filling style</text>
<rect x="49" y="319" width="140" height="20" rx="1" fill="#d0d0d0"/><text x="55" y="334">Color</text><use href="#chev" transform="translate(172,327)"/>
<rect x="270" y="321" width="16" height="16" fill="#fff"/><path d="M271 336l14-14" stroke="#e01010"/>
<path d="M293 323h12M293 326h12M293 329h12M293 332h12" stroke="#333"/>
<rect x="76" y="354" width="98" height="20" rx="1" fill="#d0d0d0"/><text x="82" y="369">CMYK</text><use href="#chev" transform="translate(157,362)"/>
<text x="57" y="400">C</text><text x="56" y="426">M</text><text x="58" y="452">Y</text><text x="57" y="478">K</text>
<rect x="74" y="392" width="184" height="7" fill="url(#gc)" stroke="#888" stroke-width=".5"/>
<rect x="74" y="418" width="184" height="7" fill="url(#gm)"/>
<rect x="74" y="444" width="184" height="7" fill="url(#gy)"/>
<rect x="74" y="470" width="184" height="7" fill="url(#gk)"/>
<g fill="#e2e2e2"><rect x="262" y="384" width="42" height="22"/><rect x="262" y="410" width="42" height="22"/><rect x="262" y="436" width="42" height="22"/><rect x="262" y="462" width="42" height="22"/></g>
<text class="n" x="266" y="400">76</text><text class="n" x="266" y="426">12</text><text class="n" x="266" y="452">0</text><text class="n" x="266" y="478">0</text>
<g fill="#161616" stroke="#eee"><circle cx="211" cy="395" r="7"/><circle cx="99.500" cy="421" r="7"/><circle cx="79.500" cy="447" r="7"/><circle cx="79.500" cy="473" r="7"/></g>
<text x="147" y="504">#</text><rect x="159" y="489" width="100" height="20" fill="#e0e0e0"/><text class="n" x="163" y="504">169DDF</text>
<rect x="265" y="490" width="18" height="18" fill="#000" stroke="#777"/><rect x="285" y="490" width="18" height="18" fill="#fff" stroke="#777"/>
<rect x="54" y="514" width="250" height="266" fill="url(#hue)"/><rect x="54" y="514" width="250" height="266" fill="url(#wh)"/><rect x="54" y="514" width="250" height="266" fill="url(#bk)"/>

<!-- right panels -->
<rect x="1114" y="110" width="301" height="790" fill="#bdbdbd"/>
<rect x="1114" y="112" width="300" height="22" fill="#a8a8a8"/><path d="M1114 134.500h300" stroke="#999"/>
<rect x="1158" y="113" width="73" height="22" fill="#bdbdbd"/>
<use href="#closeb" transform="translate(1130,123)"/><use href="#grip" transform="translate(1148,123)"/>
<text class="n" x="1173" y="129">Layers</text><path d="M1217 121l5 5M1222 121l-5 5" stroke="#333"/>
<use href="#menu" transform="translate(1399,123)"/>
<rect x="1119" y="145" width="277" height="27" rx="6" fill="#b9d7ff"/>
<rect x="1125" y="149" width="16" height="19" fill="#000" stroke="#5a7a9a" stroke-width=".5"/>
<path d="M1150 153l8 5-8 5z" fill="#333"/>
<rect x="1166" y="149" width="20" height="18" fill="#009fe3"/>
<text class="n" x="1190" y="162">Layer 1</text>
<rect x="1344" y="156" width="8" height="8" fill="none" stroke="#444"/><path d="M1340 157v-4a3 3 0 0 1 6 0v3" fill="none" stroke="#444"/>
<path d="M1358 158c3-5 9-5 12 0-3 5-9 5-12 0z" fill="none" stroke="#444"/><circle cx="1364" cy="158" r="2" fill="#444"/>
<circle cx="1382" cy="158" r="6" fill="none" stroke="#333"/>
<rect x="1399" y="145" width="10" height="112" rx="3" fill="#aaa"/>
<path d="M1118 263h292" stroke="#aaa" stroke-width="2"/>
<rect x="1118" y="269" width="292" height="20" rx="5" fill="#e0e0e0"/>
<circle cx="1133" cy="278" r="4.500" fill="none" stroke="#222" stroke-width="1.300"/><path d="M1129.500 281.500l-4 4" stroke="#222" stroke-width="1.500"/>
<text x="1142" y="284" style="fill:#aaa">Search</text>
<circle cx="1395" cy="278" r="5.500" fill="none" stroke="#222" stroke-width="1.300"/><path d="M1393 276l4 4M1397 276l-4 4M1399 282l3 3" stroke="#222"/>
<g transform="translate(1148,315)"><path d="M-8-4h16M-8 4h16" class="d"/><circle cx="-3" cy="-4" r="2.500" fill="#bdbdbd" stroke="#8a8a8a"/><circle cx="3" cy="4" r="2.500" fill="#bdbdbd" stroke="#8a8a8a"/></g>
<g transform="translate(1176,315)"><rect x="-8" y="-4" width="12" height="12" class="d" stroke-width="1.800"/><path d="M-4-4v-4H8V4H4" class="d" stroke-width="1.800"/></g>
<g transform="translate(1204,315)"><circle r="8" fill="#8a8a8a"/><rect x="-4" y="-4" width="5" height="5" fill="none" stroke="#ddd"/><rect x="-1" y="-1" width="5" height="5" fill="none" stroke="#ddd"/></g>
<g transform="translate(1232,315)"><rect x="-8" y="-8" width="16" height="16" class="d"/><rect x="-4" y="-2" width="6" height="6" class="d"/><rect x="-2" y="-4" width="6" height="6" class="d"/></g>
<g transform="translate(1260,315)"><rect x="-5" y="-5" width="10" height="10" class="d"/><path d="M-8-2h16M2 8V-8M-8 4h10" class="d"/></g>
<g transform="translate(1288,315)"><rect x="-8" y="-8" width="16" height="16" fill="#8a8a8a"/><text x="-6" y="4" style="font-size:12px;font-family:'Liberation Serif',serif;font-style:italic;fill:#ddd">fx</text></g>
<g transform="translate(1316,315)"><path d="M-8-5h3l1-2h8l1 2h3V7H-8z" fill="#8a8a8a"/><circle cy="1" r="3" fill="#bdbdbd"/></g>
<g transform="translate(1344,315)"><rect x="-4" y="-8" width="13" height="13" rx="1" fill="#333"/><rect x="-9" y="-4" width="13" height="13" rx="1" fill="#333" stroke="#bdbdbd" stroke-width=".5"/><path d="M-5.500 2.500h6M-2.500-.5v6" stroke="#eee"/></g>
<g transform="translate(1372,315)"><rect x="-9" y="-8" width="18" height="17" rx="3" fill="#8a8a8a"/><path d="M-5 2l6-4 4 2-5 4zM-5 4l6 3 4-2" fill="#ccc"/></g>
<g transform="translate(1400,315)"><path d="M-7-5h14M-3-5v-3h6v3M-6-5l1 13h10l1-13M-2-2v8M2-2v8" class="d"/></g>

<rect x="1114" y="338" width="300" height="22" fill="#a8a8a8"/><path d="M1114 360.500h300" stroke="#999"/>
<rect x="1158" y="339" width="66" height="22" fill="#bdbdbd"/>
<use href="#closeb" transform="translate(1130,349)"/><use href="#grip" transform="translate(1148,349)"/>
<path d="M1163 349l3-3 3 3M1163 352l3 3 3-3" fill="none" stroke="#333" stroke-width=".9"/><text class="n" x="1173" y="355">Color</text><path d="M1211 347l5 5M1216 347l-5 5" stroke="#333"/>
<text x="1239" y="355" style="fill:#666;font-size:11.600px">Palette</text><use href="#menu" transform="translate(1399,349)"/>
<rect x="1141" y="377" width="29" height="29" fill="#fff"/><rect x="1149" y="385" width="14" height="14" fill="#adadad"/><path d="M1162 385l6-5" stroke="#e01010"/>
<rect x="1125" y="394" width="28" height="28" fill="#009fe3" stroke="#e8e8e8"/>
<path d="M1127 391v-6c0-2 2-3 4-3h6M1134 379l4 3-4 3M1124 388l3 3 3-3" fill="none" stroke="#333" stroke-width="1.300"/>
<text x="1179" y="393">C</text><text x="1177" y="419">M</text><text x="1180" y="445">Y</text><text x="1179" y="471">K</text>
<rect x="1195" y="385" width="163" height="7" fill="url(#gc)" stroke="#888" stroke-width=".5"/>
<rect x="1195" y="411" width="163" height="7" fill="url(#gm)"/>
<rect x="1195" y="437" width="163" height="7" fill="url(#gy)"/>
<rect x="1195" y="463" width="163" height="7" fill="url(#gk)"/>
<g fill="#e0e0e0"><rect x="1362" y="377" width="42" height="22"/><rect x="1362" y="403" width="42" height="22"/><rect x="1362" y="429" width="42" height="22"/><rect x="1362" y="455" width="42" height="22"/></g>
<text class="n" x="1366" y="393">76</text><text class="n" x="1366" y="419">12</text><text class="n" x="1366" y="445">0</text><text class="n" x="1366" y="471">0</text>
<g fill="#161616" stroke="#eee"><circle cx="1316" cy="388" r="7"/><circle cx="1218" cy="414" r="7"/><circle cx="1201" cy="440" r="7"/><circle cx="1201" cy="466" r="7"/></g>
<circle cx="1134" cy="497" r="9" fill="#8a8a8a" stroke="#555"/><path d="M1130 502l7-8" stroke="#222" stroke-width="1.800"/>
<circle cx="1156" cy="497" r="9" fill="none" stroke="#eee"/>
<rect x="1176" y="488" width="21" height="18" fill="#fff" stroke="#ccc"/><path d="M1177 505l19-16" stroke="#e01010"/>
<rect x="1200" y="488" width="23" height="18" fill="#000" stroke="#666"/><rect x="1225" y="488" width="23" height="18" fill="#fff" stroke="#666"/>
<rect x="1124" y="517" width="280" height="26" fill="url(#hue)"/><rect x="1124" y="517" width="280" height="26" fill="url(#wh)"/><rect x="1124" y="517" width="280" height="26" fill="url(#bk)"/>
<text class="w" x="1134" y="563">Opacity</text>
<rect x="1183.500" y="555" width="155" height="7" rx="2" fill="#adadad" stroke="#999"/>
<circle cx="1337" cy="558" r="7" fill="#f4f4f4" stroke="#888"/>
<rect x="1348" y="548" width="56" height="20" fill="#e0e0e0"/><text class="n" x="1352" y="563">100%</text>
<rect x="1124.500" y="573.500" width="280" height="21" fill="#adadad" stroke="#a2a2a2"/>

<rect x="1114" y="605" width="300" height="23" fill="#a8a8a8"/><path d="M1114 628.500h300" stroke="#999"/>
<rect x="1158" y="607" width="109" height="22" fill="#bdbdbd"/>
<use href="#closeb" transform="translate(1130,617)"/><use href="#grip" transform="translate(1148,617)"/>
<path d="M1163 617l3-3 3 3M1163 620l3 3 3-3" fill="none" stroke="#333" stroke-width=".9"/><text x="1173" y="623" style="font-size:11.500px">Transparency</text><path d="M1254 616l5 5M1259 616l-5 5" stroke="#333"/>
<use href="#menu" transform="translate(1399,617)"/>
<rect x="1320" y="641" width="60" height="20" fill="#e0e0e0"/><text class="n" x="1324" y="656">100%</text><text class="n" x="1384" y="656">%</text>
<text x="1130" y="661" class="w">Opacity</text>
<rect x="1124" y="669" width="265" height="6" fill="url(#gt)"/><circle cx="1389" cy="672" r="7" fill="#f4f4f4" stroke="#777"/>
<text x="1171" y="704">Blend</text><rect x="1206" y="689" width="194" height="20" rx="1" fill="#ccc"/><text x="1212" y="704">Normal</text><use href="#chev" transform="translate(1383,697)"/>
<text x="1174" y="734">Mask</text><rect x="1206" y="719" width="194" height="20" rx="1" fill="#ccc"/><text x="1212" y="734">None</text><use href="#chev" transform="translate(1383,727)"/>
<rect x="1124.500" y="749.500" width="275" height="98" fill="#adadad" stroke="#a2a2a2"/>
<path d="M1124 858h276" stroke="#aaa" stroke-width="2"/>
<g transform="translate(1194,880)"><rect x="-8" y="-6" width="16" height="13" fill="#888" stroke="#444"/><ellipse cy=".5" rx="5" ry="4" fill="#666"/></g>
<g transform="translate(1222,880)"><rect x="-8" y="-6" width="16" height="13" fill="#ccc" stroke="#444"/><ellipse cy=".5" rx="5" ry="4" fill="#222"/></g>
<g transform="translate(1250,880)"><path d="M-9 0c4-7 14-7 18 0-4 7-14 7-18 0z" class="s"/><circle r="3" class="s"/><path d="M-6 7L6-7" class="s"/></g>
<path d="M1276 880l5-7a2.500 2.500 0 0 1 4 3l-5 6M1272 884l2-3a2 2 0 0 1 3 2l-2 5a2 2 0 0 1-3-1zM1271 873l2 3M1275 871v4M1269 877l3 1" class="s" stroke-width="1"/>
<g transform="translate(1306,880)"><rect x="-8" y="-6" width="16" height="13" fill="#999"/><circle cx="-2" cy="0" r="4" fill="#555"/><circle cx="2" cy="1" r="4" fill="#777"/></g>
<g transform="translate(1334,880)"><circle r="6" fill="#c0c0c0" stroke="#222" stroke-width="1.500"/><path d="M0-6a6 6 0 0 1 0 12z" fill="#222"/><path d="M0-9.500v2M0 7.500v2M-9.500 0h2M7.500 0h2M-7-7l1.500 1.500M5.500 5.500L7 7M-7 7l1.500-1.500M5.500-5.500L7-7" stroke="#222" stroke-width="1.500"/></g>
<g transform="translate(1362,880)"><path d="M-8 6l6-12 6 12z" class="d" stroke="#777"/><circle cx="5" cy="5" r="3" class="d" stroke="#777"/></g>
<g transform="translate(1390,880)"><circle r="8" class="d"/><path d="M-3-3l6 6M3-3l-6 6" class="d"/></g>

<!-- right palette -->
<rect x="1415" y="110" width="25" height="790" fill="#bcbcbc"/>
<path d="M1415 110v790" stroke="#999"/>
<g fill="#444"><rect x="1421" y="121" width="2" height="2"/><rect x="1425" y="121" width="2" height="2"/><rect x="1429" y="121" width="2" height="2"/><rect x="1433" y="121" width="2" height="2"/><rect x="1421" y="125" width="2" height="2"/><rect x="1425" y="125" width="2" height="2"/><rect x="1429" y="125" width="2" height="2"/><rect x="1433" y="125" width="2" height="2"/></g>
<path d="M1426 136h11M1426 139h11M1426 145h11M1426 148h11" stroke="#333"/><circle cx="1423" cy="138" r="2" fill="none" stroke="#333"/><circle cx="1423" cy="147" r="2" fill="none" stroke="#333"/>
<rect x="1418" y="154" width="21" height="20" fill="#fff"/><path d="M1418 174l21-20" stroke="#e01010"/>
<rect x="1418" y="174" width="21" height="20" fill="#fcc2a6"/><rect x="1418" y="194" width="21" height="20" fill="#fbbcb0"/><rect x="1418" y="214" width="21" height="20" fill="#f3abc8"/><rect x="1418" y="234" width="21" height="20" fill="#ff9199"/><rect x="1418" y="254" width="21" height="20" fill="#ffa38e"/><rect x="1418" y="274" width="21" height="20" fill="#ff9f78"/><rect x="1418" y="294" width="21" height="20" fill="#ffb277"/><rect x="1418" y="314" width="21" height="20" fill="#fdc97c"/><rect x="1418" y="334" width="21" height="20" fill="#f5de78"/><rect x="1418" y="354" width="21" height="20" fill="#cdea7d"/><rect x="1418" y="374" width="21" height="20" fill="#b8e57a"/><rect x="1418" y="394" width="21" height="20" fill="#a8e075"/><rect x="1418" y="414" width="21" height="20" fill="#8adf85"/><rect x="1418" y="434" width="21" height="20" fill="#75db88"/><rect x="1418" y="454" width="21" height="20" fill="#00e0a8"/><rect x="1418" y="474" width="21" height="20" fill="#2edbc4"/><rect x="1418" y="494" width="21" height="20" fill="#60dcd2"/><rect x="1418" y="514" width="21" height="20" fill="#2cd4d2"/><rect x="1418" y="534" width="21" height="20" fill="#68d0d6"/><rect x="1418" y="554" width="21" height="20" fill="#74ccdc"/><rect x="1418" y="574" width="21" height="20" fill="#a4c8e2"/><rect x="1418" y="594" width="21" height="20" fill="#bfcde2"/><rect x="1418" y="614" width="21" height="20" fill="#e2a9c8"/><rect x="1418" y="634" width="21" height="20" fill="#f9a2c6"/><rect x="1418" y="654" width="21" height="20" fill="#ff7aa6"/><rect x="1418" y="674" width="21" height="20" fill="#ff80a4"/><rect x="1418" y="694" width="21" height="20" fill="#ff5098"/><rect x="1418" y="714" width="21" height="20" fill="#ff5c88"/><rect x="1418" y="734" width="21" height="20" fill="#ff6684"/><rect x="1418" y="754" width="21" height="20" fill="#ff8a6e"/><rect x="1418" y="774" width="21" height="20" fill="#ffa664"/><rect x="1418" y="794" width="21" height="20" fill="#ffc468"/><rect x="1418" y="814" width="21" height="20" fill="#f8e034"/><rect x="1418" y="834" width="21" height="20" fill="#d2e430"/><rect x="1418" y="854" width="21" height="20" fill="#aee45c"/><rect x="1418" y="874" width="21" height="2" fill="#60e060"/>
<path d="M1422 880h14a2 2 0 0 1 2 2v8a2 2 0 0 1-2 2h-6l-3 3v-3h-5a2 2 0 0 1-2-2v-8a2 2 0 0 1 2-2z" fill="#333"/><path d="M1424 884h10M1424 887h7" stroke="#ddd"/>
</svg>
</body></html>
